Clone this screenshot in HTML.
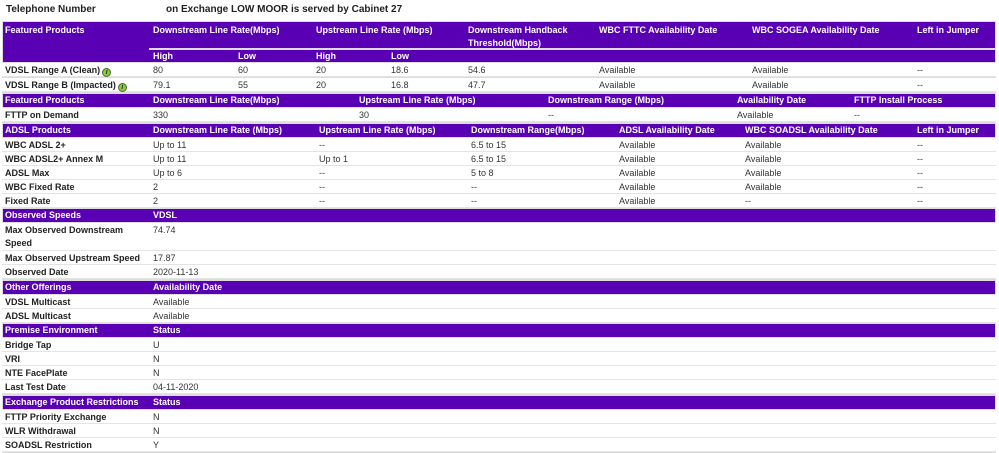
<!DOCTYPE html>
<html><head><meta charset="utf-8"><style>
*{margin:0;padding:0;box-sizing:border-box}
body{width:999px;height:453px;background:#fff;font-family:"Liberation Sans",Arial,sans-serif;font-size:9px;color:#333;position:relative;overflow:hidden}
.t{position:absolute;left:2px;width:994px;background:#ddd;}
.r{position:absolute;left:0;width:100%;background:#fff;border-bottom:1px solid #e4e4e4}
.h{background:#5a00b4;color:#fff;font-weight:bold;border-bottom:none}
.r span{position:absolute;top:2px;white-space:nowrap;line-height:13px}
.r span.l{font-weight:bold;color:#222}
.h span.l{color:#fff}
.title{position:absolute;top:4px;font-size:10px;font-weight:bold;color:#222}
.ic{display:inline-block;width:9px;height:9px;border-radius:50%;background:#8c3;border:1px solid #563;vertical-align:-1px;margin-left:2px;font-size:7px;color:#234;text-align:center;line-height:7px;font-style:italic}
</style></head><body>
<div class="title" style="left:6px">Telephone Number</div>
<div class="title" style="left:166px">on Exchange LOW MOOR is served by Cabinet 27</div>

<div class="t" style="top:21px;height:72px">
<div class="r h" style="top:1px;height:26px;width:992px;left:1px"><span class="l" style="left:2px">Featured Products</span><span style="left:150px">Downstream Line Rate(Mbps)</span><span style="left:313px">Upstream Line Rate (Mbps)</span><span style="left:465px">Downstream Handback<br>Threshold(Mbps)</span><span style="left:596px">WBC FTTC Availability Date</span><span style="left:749px">WBC SOGEA Availability Date</span><span style="left:914px">Left in Jumper</span></div>
<div style="position:absolute;top:27px;left:1px;width:146px;height:2px;background:#5a00b4"></div>
<div class="r h" style="top:29px;height:12px;width:992px;left:1px"><span style="left:150px;top:0">High</span><span style="left:235px;top:0">Low</span><span style="left:313px;top:0">High</span><span style="left:388px;top:0">Low</span></div>
<div class="r" style="top:42px;height:14px"><span class="l" style="left:3px;top:1px">VDSL Range A (Clean)<i class="ic">i</i></span><span style="left:151px;top:1px">80</span><span style="left:236px;top:1px">60</span><span style="left:314px;top:1px">20</span><span style="left:389px;top:1px">18.6</span><span style="left:466px;top:1px">54.6</span><span style="left:597px;top:1px">Available</span><span style="left:750px;top:1px">Available</span><span style="left:915px;top:1px">--</span></div>
<div class="r" style="top:57px;height:14px"><span class="l" style="left:3px;top:1px">VDSL Range B (Impacted)<i class="ic">i</i></span><span style="left:151px;top:1px">79.1</span><span style="left:236px;top:1px">55</span><span style="left:314px;top:1px">20</span><span style="left:389px;top:1px">16.8</span><span style="left:466px;top:1px">47.7</span><span style="left:597px;top:1px">Available</span><span style="left:750px;top:1px">Available</span><span style="left:915px;top:1px">--</span></div>
</div>

<div class="t" style="top:93px;height:30px">
<div class="r h" style="top:1px;height:13px;width:992px;left:1px"><span class="l" style="left:2px;top:0">Featured Products</span><span style="left:150px;top:0">Downstream Line Rate(Mbps)</span><span style="left:356px;top:0">Upstream Line Rate (Mbps)</span><span style="left:545px;top:0">Downstream Range (Mbps)</span><span style="left:734px;top:0">Availability Date</span><span style="left:851px;top:0">FTTP Install Process</span></div>
<div class="r" style="top:15px;height:14px"><span class="l" style="left:3px;top:1px">FTTP on Demand</span><span style="left:151px;top:1px">330</span><span style="left:357px;top:1px">30</span><span style="left:546px;top:1px">--</span><span style="left:735px;top:1px">Available</span><span style="left:852px;top:1px">--</span></div>
</div>

<div class="t" style="top:123px;height:86px">
<div class="r h" style="top:1px;height:13px;width:992px;left:1px"><span class="l" style="left:2px;top:0">ADSL Products</span><span style="left:150px;top:0">Downstream Line Rate (Mbps)</span><span style="left:316px;top:0">Upstream Line Rate (Mbps)</span><span style="left:468px;top:0">Downstream Range(Mbps)</span><span style="left:616px;top:0">ADSL Availability Date</span><span style="left:742px;top:0">WBC SOADSL Availability Date</span><span style="left:914px;top:0">Left in Jumper</span></div>
<div class="r" style="top:15px;height:14px"><span class="l" style="left:3px;top:1px">WBC ADSL 2+</span><span style="left:151px;top:1px">Up to 11</span><span style="left:317px;top:1px">--</span><span style="left:469px;top:1px">6.5 to 15</span><span style="left:617px;top:1px">Available</span><span style="left:743px;top:1px">Available</span><span style="left:915px;top:1px">--</span></div>
<div class="r" style="top:29px;height:14px"><span class="l" style="left:3px;top:1px">WBC ADSL2+ Annex M</span><span style="left:151px;top:1px">Up to 11</span><span style="left:317px;top:1px">Up to 1</span><span style="left:469px;top:1px">6.5 to 15</span><span style="left:617px;top:1px">Available</span><span style="left:743px;top:1px">Available</span><span style="left:915px;top:1px">--</span></div>
<div class="r" style="top:43px;height:14px"><span class="l" style="left:3px;top:1px">ADSL Max</span><span style="left:151px;top:1px">Up to 6</span><span style="left:317px;top:1px">--</span><span style="left:469px;top:1px">5 to 8</span><span style="left:617px;top:1px">Available</span><span style="left:743px;top:1px">Available</span><span style="left:915px;top:1px">--</span></div>
<div class="r" style="top:57px;height:14px"><span class="l" style="left:3px;top:1px">WBC Fixed Rate</span><span style="left:151px;top:1px">2</span><span style="left:317px;top:1px">--</span><span style="left:469px;top:1px">--</span><span style="left:617px;top:1px">Available</span><span style="left:743px;top:1px">Available</span><span style="left:915px;top:1px">--</span></div>
<div class="r" style="top:71px;height:14px"><span class="l" style="left:3px;top:1px">Fixed Rate</span><span style="left:151px;top:1px">2</span><span style="left:317px;top:1px">--</span><span style="left:469px;top:1px">--</span><span style="left:617px;top:1px">Available</span><span style="left:743px;top:1px">--</span><span style="left:915px;top:1px">--</span></div>
</div>

<div class="t" style="top:208px;height:72px">
<div class="r h" style="top:1px;height:13px;width:992px;left:1px"><span class="l" style="left:2px;top:0">Observed Speeds</span><span style="left:150px;top:0">VDSL</span></div>
<div class="r" style="top:15px;height:28px"><span class="l" style="left:3px;top:1px">Max Observed Downstream<br>Speed</span><span style="left:151px;top:1px">74.74</span></div>
<div class="r" style="top:43px;height:14px"><span class="l" style="left:3px;top:1px">Max Observed Upstream Speed</span><span style="left:151px;top:1px">17.87</span></div>
<div class="r" style="top:57px;height:14px"><span class="l" style="left:3px;top:1px">Observed Date</span><span style="left:151px;top:1px">2020-11-13</span></div>
</div>

<div class="t" style="top:280px;height:44px">
<div class="r h" style="top:1px;height:13px;width:992px;left:1px"><span class="l" style="left:2px;top:0">Other Offerings</span><span style="left:150px;top:0">Availability Date</span></div>
<div class="r" style="top:15px;height:14px"><span class="l" style="left:3px;top:1px">VDSL Multicast</span><span style="left:151px;top:1px">Available</span></div>
<div class="r" style="top:29px;height:14px"><span class="l" style="left:3px;top:1px">ADSL Multicast</span><span style="left:151px;top:1px">Available</span></div>
</div>

<div class="t" style="top:323px;height:72px">
<div class="r h" style="top:1px;height:13px;width:992px;left:1px"><span class="l" style="left:2px;top:0">Premise Environment</span><span style="left:150px;top:0">Status</span></div>
<div class="r" style="top:15px;height:14px"><span class="l" style="left:3px;top:1px">Bridge Tap</span><span style="left:151px;top:1px">U</span></div>
<div class="r" style="top:29px;height:14px"><span class="l" style="left:3px;top:1px">VRI</span><span style="left:151px;top:1px">N</span></div>
<div class="r" style="top:43px;height:14px"><span class="l" style="left:3px;top:1px">NTE FacePlate</span><span style="left:151px;top:1px">N</span></div>
<div class="r" style="top:57px;height:14px"><span class="l" style="left:3px;top:1px">Last Test Date</span><span style="left:151px;top:1px">04-11-2020</span></div>
</div>

<div class="t" style="top:395px;height:58px">
<div class="r h" style="top:1px;height:13px;width:992px;left:1px"><span class="l" style="left:2px;top:0">Exchange Product Restrictions</span><span style="left:150px;top:0">Status</span></div>
<div class="r" style="top:15px;height:14px"><span class="l" style="left:3px;top:1px">FTTP Priority Exchange</span><span style="left:151px;top:1px">N</span></div>
<div class="r" style="top:29px;height:14px"><span class="l" style="left:3px;top:1px">WLR Withdrawal</span><span style="left:151px;top:1px">N</span></div>
<div class="r" style="top:43px;height:14px"><span class="l" style="left:3px;top:1px">SOADSL Restriction</span><span style="left:151px;top:1px">Y</span></div>
</div>
</body></html>
